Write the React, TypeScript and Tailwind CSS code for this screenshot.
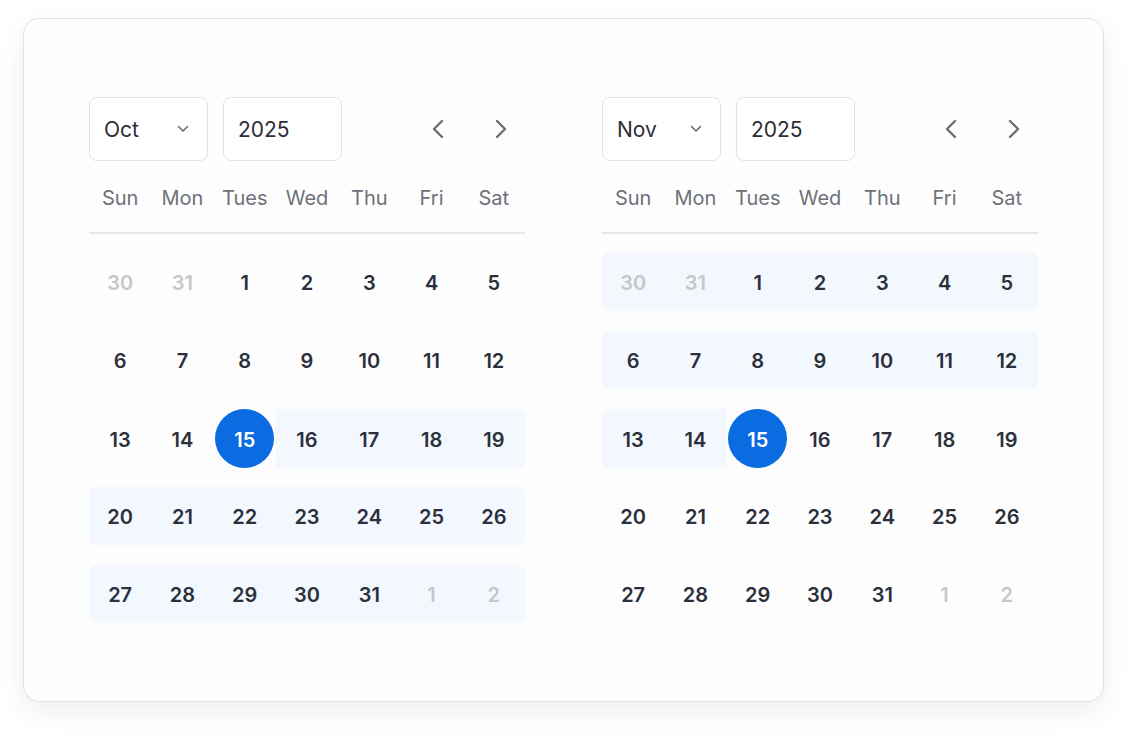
import React from 'react';

type Day = { n: number; muted?: boolean; selected?: boolean; inRange?: boolean };

const WEEKDAYS = ['Sun', 'Mon', 'Tues', 'Wed', 'Thu', 'Fri', 'Sat'];

function buildOct(): Day[][] {
    const days: Day[] = [{ n: 30, muted: true }, { n: 31, muted: true }];
    for (let i = 1; i <= 31; i++) days.push({ n: i, selected: i === 15, inRange: i > 15 });
    days.push({ n: 1, muted: true, inRange: true }, { n: 2, muted: true, inRange: true });
    const rows: Day[][] = [];
    for (let i = 0; i < days.length; i += 7) rows.push(days.slice(i, i + 7));
    return rows;
}

function buildNov(): Day[][] {
    const days: Day[] = [{ n: 30, muted: true, inRange: true }, { n: 31, muted: true, inRange: true }];
    for (let i = 1; i <= 31; i++) days.push({ n: i, selected: i === 15, inRange: i < 15 });
    days.push({ n: 1, muted: true }, { n: 2, muted: true });
    const rows: Day[][] = [];
    for (let i = 0; i < days.length; i += 7) rows.push(days.slice(i, i + 7));
    return rows;
}

function SmallChevron() {
    return (
        <svg width="12" height="8" viewBox="0 0 12 8" fill="none">
            <path d="M1.5 1.5 L6 6 L10.5 1.5" stroke="#6b6e74" strokeWidth="1.6" strokeLinecap="round" strokeLinejoin="round" />
        </svg>
    );
}

function NavChevron({ dir }: { dir: 'left' | 'right' }) {
    return (
        <svg width="12" height="20" viewBox="0 0 12 20" fill="none">
            <path
                d={dir === 'left' ? 'M10 2 L2 10 L10 18' : 'M2 2 L10 10 L2 18'}
                stroke="#6b6e74"
                strokeWidth="2.4"
                strokeLinecap="round"
                strokeLinejoin="round"
            />
        </svg>
    );
}

function Calendar({ month, rows }: { month: string; rows: Day[][] }) {
    return (
        <div className="w-[436px] flex flex-col">
            {/* header */}
            <div className="flex items-center h-[64px]">
                <div className="w-[119px] h-[64px] rounded-lg border border-[#e3e3e6] bg-white flex items-center justify-between pl-[14px] pr-[18px]">
                    <span className="text-[21px] text-[#2b2e35] pt-[2px]">{month}</span>
                    <SmallChevron />
                </div>
                <div className="ml-[15px] w-[119px] h-[64px] rounded-lg border border-[#e3e3e6] bg-white flex items-center pl-[14px]">
                    <span className="text-[21px] text-[#2b2e35] pt-[2px]">2025</span>
                </div>
                <div className="ml-auto flex items-center gap-[23px] pr-[4px]">
                    <button className="w-10 h-10 flex items-center justify-center">
                        <NavChevron dir="left" />
                    </button>
                    <button className="w-10 h-10 flex items-center justify-center">
                        <NavChevron dir="right" />
                    </button>
                </div>
            </div>

            {/* weekdays */}
            <div className="grid grid-cols-7 h-[40px] mt-[16px] items-center">
                {WEEKDAYS.map((w) => (
                    <div key={w} className="text-center text-[20px] text-[#6e7179] pt-[2px]">{w}</div>
                ))}
            </div>
            <div className="h-[2px] bg-[#e6e7ea] mt-[15px]" />

            {/* days */}
            <div className="flex flex-col gap-[20px] mt-[19px]">
                {rows.map((row, ri) => (
                    <div key={ri} className="grid grid-cols-7 h-[58px]">
                        {row.map((d, ci) => {
                            const prev = row[ci - 1];
                            const next = row[ci + 1];
                            const roundL = d.inRange && (!prev || !prev.inRange) && ci === 0;
                            const roundR = d.inRange && (!next || !next.inRange) && ci === 6;
                            return (
                                <div
                                    key={ci}
                                    className={`flex items-center justify-center ${d.inRange ? 'bg-[#f3f7fe]' : ''} ${roundL ? 'rounded-l-md' : ''} ${roundR ? 'rounded-r-md' : ''}`}
                                >
                                    {d.selected ? (
                                        <div className="w-[59px] h-[59px] rounded-full bg-[#0b6be0] flex items-center justify-center text-white text-[20px] font-semibold pt-[2px]">
                                            {d.n}
                                        </div>
                                    ) : (
                                        <span className={`text-[20px] font-semibold pt-[2px] ${d.muted ? 'text-[#c5c7cb]' : 'text-[#2b303a]'}`}>
                                            {d.n}
                                        </span>
                                    )}
                                </div>
                            );
                        })}
                    </div>
                ))}
            </div>
        </div>
    );
}

export default function App() {
    return (
        <div className="w-[1134px] h-[736px] bg-white pt-[18px] pl-[23px]" style={{ fontFamily: 'Inter, "Noto Sans", sans-serif' }}>
            <div className="w-[1081px] h-[684px] rounded-2xl border-[1.5px] border-[#e2e2e5] bg-[#fdfdfe] shadow-[0_10px_28px_rgba(0,0,0,0.07)] pl-[65px] pt-[78px]">
                <div className="flex gap-[77px]">
                    <Calendar month="Oct" rows={buildOct()} />
                    <Calendar month="Nov" rows={buildNov()} />
                </div>
            </div>
        </div>
    );
}
